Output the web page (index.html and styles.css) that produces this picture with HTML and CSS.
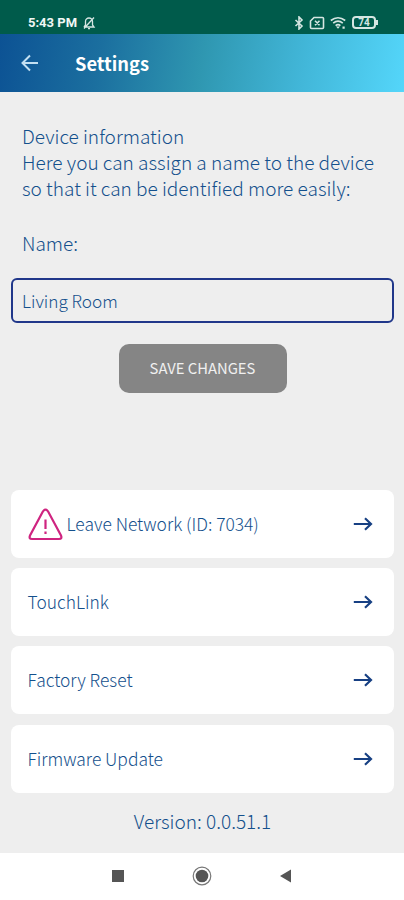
FILE: index.html
```html
<!DOCTYPE html>
<html lang="en">
  <head>
    <meta charset="utf-8">
    <title>Settings</title>
    <link rel="stylesheet" href="styles.css">
  </head>
  <body>
    <div class="status-bar">
      <span class="clock">5:43 PM</span>
      <svg class="mute" width="14" height="14" viewBox="0 0 14 14">
        <path d="M2 11h10l-1.500-2V5.500a3.500 3.500 0 0 0-7 0V9L2 11M6 12.600h2M12 1.500 2 12.500" />
      </svg>
      <div class="status-icons">
        <svg width="10" height="14" viewBox="0 0 10 14">
          <path d="M1.500 4 8 10l-3 3V1l3 3-6.500 6" />
        </svg>
        <svg width="16" height="14" viewBox="0 0 16 14">
          <path d="M5 1.500h8.500a1 1 0 0 1 1 1v9a1 1 0 0 1-1 1h-11a1 1 0 0 1-1-1V5zM6 4.800l4.500 4.500M10.500 4.800 6 9.300" />
        </svg>
        <svg width="17" height="14" viewBox="0 0 17 14">
          <path d="M.8 4.500q7.200-5.600 14.400 0M3.200 7.200q4.800-4 9.600 0M5.600 9.600q2.400-2 4.800 0" />
          <path class="solid" d="M6 10.500 8 12.800 10 10.500zM12.500 10.500h2.200v2.200h-2.200z" />
        </svg>
        <div class="battery">74</div>
      </div>
    </div>

    <header class="app-bar">
      <svg width="18" height="18" viewBox="0 0 18 18">
        <path d="M17 9H2M9 1.500 1.500 9 9 16.500" />
      </svg>
      <h1>Settings</h1>
    </header>

    <main>
      <p class="intro">
        Device information<br>
        Here you can assign a name to the device<br>
        so that it can be identified more easily:
      </p>
      <label class="name-label" for="name">Name:</label>
      <input class="name-input" id="name" type="text" value="Living Room">
      <button class="save">SAVE CHANGES</button>

      <div class="actions">
        <a class="action">
          <svg class="warning" width="35" height="33" viewBox="0 0 35 33">
            <path d="M15 3.300 2 27.500q-1.500 3.500 2 3.500h27q3.500 0 2-3.500L20 3.300q-2.500-3.300-5 0zM17.500 11.500v9.500M17.500 23.500v2.500" />
          </svg>
          <span>Leave Network (ID: 7034)</span>
          <svg class="arrow" width="20" height="14" viewBox="0 0 20 14">
            <path d="M.8 7H18M12 1.300 18 7l-6 5.700" />
          </svg>
        </a>
        <a class="action">
          <span>TouchLink</span>
          <svg class="arrow" width="20" height="14" viewBox="0 0 20 14">
            <path d="M.8 7H18M12 1.300 18 7l-6 5.700" />
          </svg>
        </a>
        <a class="action">
          <span>Factory Reset</span>
          <svg class="arrow" width="20" height="14" viewBox="0 0 20 14">
            <path d="M.8 7H18M12 1.300 18 7l-6 5.700" />
          </svg>
        </a>
        <a class="action">
          <span>Firmware Update</span>
          <svg class="arrow" width="20" height="14" viewBox="0 0 20 14">
            <path d="M.8 7H18M12 1.300 18 7l-6 5.700" />
          </svg>
        </a>
      </div>
      <p class="version">Version: 0.0.51.1</p>
    </main>

    <nav class="nav-bar">
      <svg width="20" height="20" viewBox="0 0 20 20"><path d="M4 4h12v12H4z" /></svg>
      <svg width="20" height="20" viewBox="0 0 20 20">
        <circle class="ring" cx="10" cy="10" r="8.800" />
        <circle cx="10" cy="10" r="6.300" />
      </svg>
      <svg width="20" height="20" viewBox="0 0 20 20"><path d="M15 3.500v13L4 10z" /></svg>
    </nav>
  </body>
</html>
```

FILE: styles.css
```css
* {
  box-sizing: border-box;
}
body {
  display: flex;
  flex-direction: column;
  height: 900px;
  margin: 0;
  background: #eee;
  color: #14508c;
  font-family: "Noto Sans CJK SC", "Open Sans", sans-serif;
  font-size: 19.05px;
  font-weight: 300;
}
svg {
  flex: none;
  fill: none;
  stroke: currentColor;
}
.status-bar {
  display: flex;
  align-items: center;
  height: 34px;
  padding: 11px 26px 0 28px;
  background: #005b4b;
  color: #d5e6e2;
}
.clock {
  width: 49px;
  color: #f0f7f5;
  font: bold 13px/16px Roboto, sans-serif;
  white-space: nowrap;
}
.mute {
  margin-left: 5px;
  stroke-width: 1.300;
}
.status-icons {
  display: flex;
  align-items: center;
  gap: 5px;
  margin-left: auto;
  stroke-width: 1.600;
}
.solid {
  fill: currentColor;
  stroke: none;
}
.battery {
  position: relative;
  width: 24px;
  height: 13px;
  margin-right: 2px;
  border: 2px solid #d5e6e2;
  border-radius: 4px;
  font: bold 10px/9px Roboto, sans-serif;
  text-align: center;
}
.battery::after {
  content: "";
  position: absolute;
  top: 2px;
  right: -4px;
  width: 2px;
  height: 5px;
  background: #d5e6e2;
}
.app-bar {
  display: flex;
  align-items: center;
  gap: 36px;
  height: 58px;
  padding: 0 21px;
  background: linear-gradient(100deg, #0c5294 0%, #1b6f9f 25%, #2f97b1 50%, #42b7d9 75%, #54d6fa 100%);
  color: #c3e0f2;
  stroke-width: 2;
}
h1 {
  margin: 0;
  color: #fff;
  font-size: 18.3px;
  line-height: 26px;
}
main {
  display: flex;
  flex: 1;
  flex-direction: column;
  padding: 31px 10px 0 11px;
}
.intro {
  margin: 0 0 29px 11px;
  line-height: 26px;
  white-space: nowrap;
}
.name-label {
  margin: 0 0 22px 11px;
  line-height: 26px;
}
.name-input {
  height: 45px;
  padding: 0 9px 1px;
  border: 2px solid #20378a;
  border-radius: 6px;
  background: transparent;
  color: #14508c;
  font-family: inherit;
  font-size: 17.2px;
  font-weight: 300;
}
.save {
  align-self: center;
  width: 168px;
  height: 49px;
  margin: 21px 0 97px;
  padding: 0 0 2px;
  border: none;
  border-radius: 10px;
  background: #858585;
  color: #f0f0f0;
  font-family: inherit;
  font-size: 14.8px;
}
.actions {
  display: flex;
  flex-direction: column;
  gap: 10.200px;
}
.action {
  display: flex;
  align-items: center;
  height: 68px;
  padding: 0 21px 0 16.500px;
  border-radius: 8px;
  background: #fff;
  font-size: 17.4px;
  line-height: 26px;
}
.warning {
  margin-right: 4px;
  color: #cf2480;
  stroke-width: 2.200;
}
.arrow {
  margin-left: auto;
  color: #174083;
  stroke-width: 2.200;
}
.version {
  margin: 15px 0 0;
  line-height: 26px;
  text-align: center;
}
.nav-bar {
  display: flex;
  justify-content: center;
  gap: 64px;
  height: 47px;
  padding-top: 13px;
  background: #fff;
  color: #555;
}
.nav-bar svg {
  fill: currentColor;
  stroke: none;
}
.nav-bar .ring {
  fill: none;
  stroke: #777;
  stroke-width: 1.200;
}
```
